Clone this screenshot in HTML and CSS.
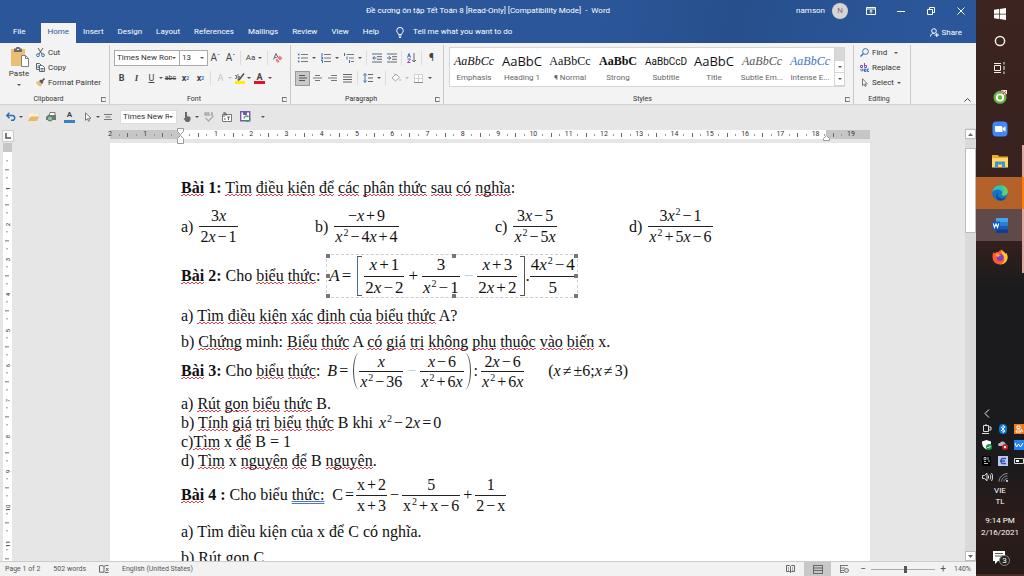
FILE: index.html
```html
<!DOCTYPE html>
<html lang="vi">
<head>
  <meta charset="UTF-8">
  <meta name="viewport" content="width=device-width, initial-scale=1.0">
  <title>Đề cương ôn tập Tết Toán 8 - Word</title>
  <link rel="stylesheet" href="styles.css">
</head>
<body>
  <div class="word">
    <header class="titlebar">
      <div class="title-row">
        <h1 class="title">Đề cương ôn tập Tết Toán 8 [Read-Only] [Compatibility Mode]&nbsp; -&nbsp; Word</h1>
        <div class="window-tools">
          <span>namson</span>
          <span class="avatar">N</span>
          <button class="win-btn" aria-label="Ribbon display options"><svg width="10" height="8" viewBox="0 0 10 8"><path d="M.5.5h9v7h-9zM.5 2h9M5 6.500V3.500M3.500 4.700 5 3.300l1.500 1.400" fill="none" stroke="#fff"/></svg></button>
          <button class="win-btn" aria-label="Minimize"><svg width="8" height="8" viewBox="0 0 8 8"><path d="M0 4.500h8" stroke="#fff"/></svg></button>
          <button class="win-btn" aria-label="Restore"><svg width="8" height="8" viewBox="0 0 8 8"><path d="M.5 2.500h5v5h-5zM2.500 2V.5h5v5H6" fill="none" stroke="#fff"/></svg></button>
          <button class="win-btn" aria-label="Close"><svg width="8" height="8" viewBox="0 0 8 8"><path d="M.5.5l7 7M7.500.5l-7 7" stroke="#fff"/></svg></button>
        </div>
      </div>
      <nav class="tabs">
        <a class="tab file" href="#">File</a>
        <a class="tab active" href="#">Home</a>
        <a class="tab" href="#">Insert</a>
        <a class="tab" href="#">Design</a>
        <a class="tab" href="#">Layout</a>
        <a class="tab" href="#">References</a>
        <a class="tab" href="#">Mailings</a>
        <a class="tab" href="#">Review</a>
        <a class="tab" href="#">View</a>
        <a class="tab" href="#">Help</a>
        <button class="tell-me">
          <svg width="8" height="11" viewBox="0 0 8 11"><path d="M2.500 7.500C2.500 6.300.7 5.500.7 3.700a3.300 3.300 0 0 1 6.600 0c0 1.800-1.800 2.600-1.800 3.800zM2.500 9h3M3 10.500h2" fill="none" stroke="#fff"/></svg>
          Tell me what you want to do
        </button>
        <button class="share">
          <svg width="9" height="9" viewBox="0 0 9 9"><path d="M.5 8.500c0-2 1.500-3.200 3.500-3.200M4 .7a2.200 2.200 0 1 1 0 4.600 2.200 2.200 0 0 1 0-4.600M4.500 7H9M6.800 4.800v4.400" fill="none" stroke="#fff"/></svg>
          Share
        </button>
      </nav>
    </header>

    <section class="ribbon">
      <div class="group clipboard">
        <div class="group-body">
          <button class="paste">
            <svg width="19" height="21" viewBox="0 0 19 21"><path d="M1 2h14v17H1z" fill="#eabf73"/><path d="M4 1.500h2a2 2 0 0 1 4 0h2V5H4z" fill="#6a6a6a"/><path d="M7 2h2v1H7z" fill="#fff"/><path d="M11.500 8.500h4l3 3v8h-7z" fill="#fff" stroke="#808080"/><path d="M15.500 8.500v3h3" fill="none" stroke="#808080"/></svg>
            Paste
            <span class="caret"></span>
          </button>
          <div class="stack">
            <button class="cmd"><svg width="9" height="9" viewBox="0 0 9 9"><path d="M2 0l4 6M7 0L3 6" stroke="#555" fill="none"/><circle cx="2" cy="7.200" r="1.400" fill="none" stroke="#3a6db5"/><circle cx="7" cy="7.200" r="1.400" fill="none" stroke="#3a6db5"/></svg>Cut</button>
            <button class="cmd"><svg width="9" height="9" viewBox="0 0 9 9"><path d="M3 6.500H.5v-6h3L5 2" fill="none" stroke="#666"/><path d="M3.500 2.500h3l2 2v4h-5z" fill="#fff" stroke="#666"/><path d="M4.500 5.500h3M4.500 7h3M1.500 3h1.500M1.500 4.500h1.500" stroke="#3a6db5"/></svg>Copy</button>
            <button class="cmd"><svg width="9" height="9" viewBox="0 0 9 9"><path d="M0 4l3-1 3 3-1 2.500-2-.5L0 5z" fill="#eabf73"/><path d="M3 3l2-1.500L7.500 4 6 6z" fill="#555"/><path d="M6 3l2.500-2.500" stroke="#555" stroke-width="1.600"/></svg>Format Painter</button>
          </div>
        </div>
        <div class="group-label">Clipboard<i class="launcher"></i></div>
      </div>

      <div class="group font">
        <div class="group-body column">
          <div class="tools">
            <label class="combo family"><select aria-label="Font"><option>Times New Roman</option></select><span class="caret"></span></label><label class="combo size"><select aria-label="Font size"><option>13</option></select><span class="caret"></span></label>
            <button class="ico letter-btn">A<sup>ˆ</sup></button>
            <button class="ico letter-btn">A<sup>ˇ</sup></button>
            <i class="sep"></i>
            <button class="ico case-btn">Aa<span class="caret"></span></button>
            <i class="sep light"></i>
            <button class="ico" aria-label="Clear formatting"><svg width="10" height="10" viewBox="0 0 10 10"><path d="M.5 6.500L3 .5l2 4M1.500 4.500h2" fill="none" stroke="#666"/><path d="M2.500 7l4-4.500L9.500 5l-4 4.500H4z" fill="#e8808c"/><path d="M4 5.300l3 2.500" stroke="#fff"/></svg></button>
          </div>
          <div class="tools second">
            <button class="ico bold">B</button>
            <button class="ico ital">I</button>
            <button class="ico under">U</button>
            <span class="caret"></span>
            <button class="ico strike">abc</button>
            <button class="ico bold">x<sub>2</sub></button>
            <button class="ico bold">x<sup>2</sup></button>
            <i class="sep light"></i>
            <button class="ico effect">A</button>
            <span class="caret pale"></span>
            <button class="ico" aria-label="Highlight"><svg width="10" height="11" viewBox="0 0 10 11"><path d="M0 8h10v3H0z" fill="#ffee00"/><path d="M4 7l5-6.500M3 7.500L4.500 5" stroke="#555" stroke-width="1.600"/><path d="M0 2.500h1.500v3H0M3 1v4.500h1.500v-2H3" fill="none" stroke="#777"/></svg></button>
            <span class="caret"></span>
            <button class="ico color">A</button>
            <span class="caret"></span>
          </div>
        </div>
        <div class="group-label">Font<i class="launcher"></i></div>
      </div>

      <div class="group paragraph">
        <div class="group-body column">
          <div class="tools">
            <button class="ico" aria-label="Bullets"><svg width="10" height="10" viewBox="0 0 10 10"><path d="M3 1.500h7M3 5h7M3 8.500h7" stroke="#777"/><path d="M0 1.500h1.500M0 5h1.500M0 8.500h1.500" stroke="#3a6db5" stroke-width="1.500"/></svg></button>
            <span class="caret"></span>
            <button class="ico" aria-label="Numbering"><svg width="10" height="10" viewBox="0 0 10 10"><path d="M3 1.500h7M3 5h7M3 8.500h7" stroke="#777"/><path d="M1 0v3M0 4h1.500v2H0M0 7.500h1.500V10" stroke="#3a6db5" fill="none"/></svg></button>
            <span class="caret"></span>
            <button class="ico" aria-label="Multilevel list"><svg width="10" height="10" viewBox="0 0 10 10"><path d="M2.500 1.500H10M5 5h5M7 8.500h3" stroke="#777"/><path d="M.5 0v3M3 3.500v3M5.500 7v3" stroke="#3a6db5"/></svg></button>
            <span class="caret"></span>
            <i class="sep light"></i>
            <button class="ico" aria-label="Decrease indent"><svg width="10" height="10" viewBox="0 0 10 10"><path d="M0 1h10M5 3.700h5M5 6.300h5M0 9h10" stroke="#666"/><path d="M4.500 5H.8M2.500 3.200L.8 5l1.700 1.800" fill="none" stroke="#3a6db5"/></svg></button>
            <button class="ico" aria-label="Increase indent"><svg width="10" height="10" viewBox="0 0 10 10"><path d="M0 1h10M5 3.700h5M5 6.300h5M0 9h10" stroke="#666"/><path d="M0 5h3.700M2 3.200L3.700 5 2 6.800" fill="none" stroke="#3a6db5"/></svg></button>
            <i class="sep light"></i>
            <button class="ico" aria-label="Sort"><svg width="10" height="10" viewBox="0 0 10 10"><path d="M.5 4.500L2 .5l1.500 4M1 3h2" fill="none" stroke="#3a6db5"/><path d="M.5 6h3l-3 3.500h3" fill="none" stroke="#8a4fb0"/><path d="M7 0v9M5 7l2 2 2-2" fill="none" stroke="#666"/></svg></button>
            <i class="sep light"></i>
            <button class="ico letter-btn">¶</button>
          </div>
          <div class="tools second">
            <button class="ico pressed" aria-label="Align left"><svg width="10" height="8" viewBox="0 0 10 8"><path d="M1 1.500h6M1 4h8M1 6.500h6" stroke="#555"/></svg></button>
            <button class="ico" aria-label="Center"><svg width="9" height="8" viewBox="0 0 9 8"><path d="M2 1.500h5M0 4h9M2 6.500h5" stroke="#777"/></svg></button>
            <button class="ico" aria-label="Align right"><svg width="9" height="8" viewBox="0 0 9 8"><path d="M3 1.500h6M0 4h9M3 6.500h6" stroke="#777"/></svg></button>
            <button class="ico" aria-label="Justify"><svg width="9" height="9" viewBox="0 0 9 9"><path d="M0 .5h9M0 3h9M0 5.500h9M0 8h9" stroke="#666"/></svg></button>
            <i class="sep light"></i>
            <button class="ico" aria-label="Line spacing"><svg width="10" height="10" viewBox="0 0 10 10"><path d="M5 1.500h5M5 5h5M5 8.500h5" stroke="#666"/><path d="M2 .5v9M.3 2.500L2 .7l1.700 1.800M.3 7.500L2 9.300l1.700-1.800" fill="none" stroke="#3a6db5"/></svg></button>
            <span class="caret"></span>
            <i class="sep light"></i>
            <button class="ico" aria-label="Shading"><svg width="10" height="10" viewBox="0 0 10 10"><path d="M1 5l4-4 3.500 3.500-4 3.500z M3 .5l2 2M9 6v2" fill="#fff" stroke="#aaa"/></svg></button>
            <span class="caret pale"></span>
            <button class="ico" aria-label="Borders"><svg width="9" height="9" viewBox="0 0 9 9"><path d="M.5.5h8v8h-8zM4.500.5v8M.5 4.500h8" fill="#fff" stroke="#d0d0d0"/><path d="M0 8.500h9" stroke="#888"/></svg></button>
            <span class="caret"></span>
          </div>
        </div>
        <div class="group-label">Paragraph<i class="launcher"></i></div>
      </div>

      <div class="group styles">
        <div class="group-body">
          <div class="gallery">
            <button class="style"><b class="s-serif s-it">AaBbCc</b>Emphasis</button>
            <button class="style"><b class="s-sans">AaBbC</b>Heading 1</button>
            <button class="style"><b class="s-serif">AaBbCc</b>¶ Normal</button>
            <button class="style"><b class="s-serif s-bold">AaBbC</b>Strong</button>
            <button class="style"><b class="s-small">AaBbCcD</b>Subtitle</button>
            <button class="style"><b class="s-sans">AaBbC</b>Title</button>
            <button class="style"><b class="s-serif s-it s-grey">AaBbCc</b>Subtle Em...</button>
            <button class="style"><b class="s-serif s-it s-blue">AaBbCc</b>Intense E...</button>
            <div class="gallery-scroll"><i class="dim"></i><i><span class="caret"></span></i><i class="more"><span class="caret"></span></i></div>
          </div>
        </div>
        <div class="group-label">Styles<i class="launcher"></i></div>
      </div>

      <div class="group editing">
        <div class="group-body">
          <div class="stack">
            <button class="cmd"><svg width="9" height="9" viewBox="0 0 9 9"><circle cx="5.500" cy="3.500" r="2.900" fill="none" stroke="#3a6db5"/><path d="M3.300 5.700L.5 8.500" stroke="#3a6db5" stroke-width="1.400"/></svg>Find<span class="caret wide"></span></button>
            <button class="cmd"><svg width="9" height="9" viewBox="0 0 9 9"><path d="M.5 2.500h2v2h-2zM4.500 0v4.500h2v-2h-2" fill="none" stroke="#8a4fb0"/><path d="M0 7h3M2 5.500L3.500 7 2 8.500M4.500 6h1.500v2.500h-1.500zM9 6H7.500v2.500H9" fill="none" stroke="#3a6db5"/></svg>Replace</button>
            <button class="cmd"><svg width="9" height="9" viewBox="0 0 9 9"><path d="M2.500.7v7l1.700-1.500 1 2.300 1-.5-1-2.200h2z" fill="#fff" stroke="#777"/></svg>Select<span class="caret"></span></button>
          </div>
        </div>
        <div class="group-label">Editing</div>
      </div>
      <button class="collapse" aria-label="Collapse the ribbon"><svg width="7" height="4" viewBox="0 0 7 4"><path d="M.5 3.500l3-3 3 3" fill="none" stroke="#444"/></svg></button>
    </section>

    <div class="quick">
      <button class="ico" aria-label="Undo"><svg width="10" height="9" viewBox="0 0 10 9"><path d="M.8 3.500h5.500a2.400 2.400 0 0 1 0 4.800H5M3.500.7L.8 3.500l2.700 2.800" fill="none" stroke="#2f6db5" stroke-width="1.400"/></svg></button>
      <span class="caret"></span>
      <button class="ico gap" aria-label="Open"><svg width="11" height="8" viewBox="0 0 11 8"><path d="M1 .5h4l1 1h4V4H1z" fill="#fff0cf"/><path d="M2.500 3.500H11L9 8H0z" fill="#e8b863"/></svg></button>
      <button class="ico gap" aria-label="Print preview"><svg width="11" height="10" viewBox="0 0 11 10"><path d="M2 3h8v5H0V5z" fill="#777"/><path d="M4 .5h5v3H3z" fill="#fff" stroke="#777"/><circle cx="4" cy="6.500" r="2.500" fill="#8fc6a0" stroke="#4e7f6a"/></svg></button>
      <button class="ico gap qcolor">A</button>
      <button class="ico gap" aria-label="Select objects"><svg width="8" height="10" viewBox="0 0 8 10"><path d="M1.500.8v7.500l2-1.700 1 2.600 1.200-.5-1-2.500h2.300z" fill="#fff" stroke="#777"/></svg></button>
      <span class="caret"></span>
      <button class="ico" aria-label="Center"><svg width="8" height="8" viewBox="0 0 8 8"><path d="M0 1.500h8M1.500 4h5M0 6.500h8" stroke="#777"/></svg></button>
      <label class="combo quick-font"><select aria-label="Font name"><option>Times New Roman</option></select><span class="caret"></span></label>
      <button class="ico" aria-label="Touch mode"><svg width="8" height="10" viewBox="0 0 8 10"><path d="M2 0h2v4l3.500 1v3L6 10H3L.5 6.500 2 6z" fill="#6a6a6a"/></svg></button>
      <span class="caret"></span>
      <button class="ico gap" aria-label="Spelling"><svg width="10" height="10" viewBox="0 0 10 10"><path d="M1 1h2v2H1zM4.500 0v3h1.500M9 1H7.500v2H9M1.500 6l3 3L9.500 4" fill="none" stroke="#aaa" stroke-width="1.300"/></svg></button>
      <button class="ico gap" aria-label="Text box"><svg width="10" height="10" viewBox="0 0 10 10"><path d="M.5 2.500h9v7h-9z" fill="#fff" stroke="#777"/><path d="M2 0v5M2 1h2v3M5 5h3M6.500 5v3M2 7h2" fill="none" stroke="#666"/></svg></button>
      <button class="ico gap" aria-label="Save"><svg width="11" height="11" viewBox="0 0 11 11"><path d="M.7.7h9v9h-9z" fill="#fff" stroke="#7a58a8" stroke-width="1.400"/><path d="M3 1h4v3H3z" fill="#7a58a8"/><path d="M4 7.500a2.500 2.500 0 0 1 4.500-1.500M10 7.500a2.500 2.500 0 0 1-4.500 1.700" fill="none" stroke="#3f9b6a" stroke-width="1.400"/></svg></button>
      <span class="caret more-tools"></span>
    </div>

    <main class="workspace">
      <aside class="ruler-side">
        <div class="corner"><svg width="6" height="6" viewBox="0 0 6 6"><path d="M1 0v5h5" fill="none" stroke="#555" stroke-width="1.500"/></svg></div>
        <div class="vruler">
          <div class="margin"></div>
          <ol class="vmarks"><li></li><li>1</li><li>2</li><li>3</li><li>4</li><li>5</li><li>6</li><li>7</li><li>8</li><li>9</li><li>10</li><li>11</li></ol>
        </div>
      </aside>

      <div class="sheet">
        <div class="hruler">
          <ol class="hmarks">
            <li><span>2</span></li><li><span>1</span></li><li><span></span></li><li><span>1</span></li><li><span>2</span></li><li><span>3</span></li><li><span>4</span></li><li><span>5</span></li><li><span>6</span></li><li><span>7</span></li><li><span>8</span></li><li><span>9</span></li><li><span>10</span></li><li><span>11</span></li><li><span>12</span></li><li><span>13</span></li><li><span>14</span></li><li><span>15</span></li><li><span>16</span></li><li><span>17</span></li><li><span>18</span></li><li class="last"><span>19</span></li>
          </ol>
          <svg class="indent left" width="7" height="16" viewBox="0 0 7 16"><path d="M.5.5h6v3l-3 3-3-3zM3.500 7.500l3 3v5h-6v-5z" fill="#fff" stroke="#999"/></svg>
          <svg class="indent right" width="7" height="6" viewBox="0 0 7 6"><path d="M3.500.5l3 3v2h-6v-2z" fill="#fff" stroke="#999"/></svg>
        </div>

        <article class="page">
          <p class="line"><b><u>Bài</u> 1:</b> <u>Tìm</u> <u>điều</u> <u>kiện</u> <u>để</u> <u>các</u> <u>phân</u> <u>thức</u> <u>sau</u> <u>có</u> <u>nghĩa</u>:</p>

          <div class="exercises">
            <div class="eq">a) <span class="frac"><span>3<i>x</i></span><span>2<i>x</i><em>−</em>1</span></span></div>
            <div class="eq">b) <span class="frac"><span>−<i>x</i><em>+</em>9</span><span><i>x</i><sup>2</sup><em>−</em>4<i>x</i><em>+</em>4</span></span></div>
            <div class="eq">c) <span class="frac"><span>3<i>x</i><em>−</em>5</span><span><i>x</i><sup>2</sup><em>−</em>5<i>x</i></span></span></div>
            <div class="eq">d) <span class="frac"><span>3<i>x</i><sup>2</sup><em>−</em>1</span><span><i>x</i><sup>2</sup><em>+</em>5<i>x</i><em>−</em>6</span></span></div>
          </div>

          <div class="line equation second-eq">
            <p><b><u>Bài</u> 2:</b> Cho <u>biểu</u> <u>thức</u>:</p>
            <div class="selected">
              <span><i>A</i><em>=</em></span>
              <span class="bracket open"></span>
              <span class="frac"><span><i>x</i><em>+</em>1</span><span>2<i>x</i><em>−</em>2</span></span>
              <span class="op">+</span>
              <span class="frac"><span>3</span><span><i>x</i><sup>2</sup><em>−</em>1</span></span>
              <span class="op faint">−</span>
              <span class="frac"><span><i>x</i><em>+</em>3</span><span>2<i>x</i><em>+</em>2</span></span>
              <span class="bracket close"></span>
              <span class="dot">.</span>
              <span class="frac"><span>4<i>x</i><sup>2</sup><em>−</em>4</span><span>5</span></span>
              <i class="handle tl"></i><i class="handle tc"></i><i class="handle tr"></i>
              <i class="handle ml"></i><i class="handle mr"></i>
              <i class="handle bl"></i><i class="handle bc"></i><i class="handle br"></i>
            </div>
          </div>
          <p class="line spaced">a) <u>Tìm</u> <u>điều</u> <u>kiện</u> <u>xác</u> <u>định</u> <u>của</u> <u>biểu</u> <u>thức</u> A?</p>
          <p class="line snug">b) <u>Chứng</u> minh: <u>Biểu</u> <u>thức</u> A <u>có</u> <u>giá</u> <u>trị</u> <u>không</u> <u>phụ</u> <u>thuộc</u> <u>vào</u> <u>biến</u> x.</p>

          <div class="line equation third-eq">
            <p><b><u>Bài</u> 3:</b> Cho <u>biểu</u> <u>thức</u>:</p>
            <div class="math">
              <span><i>B</i><em>=</em></span>
              <span class="paren open"></span>
              <span class="frac"><span><i>x</i></span><span><i>x</i><sup>2</sup><em>−</em>36</span></span>
              <span class="op faint">−</span>
              <span class="frac"><span><i>x</i><em>−</em>6</span><span><i>x</i><sup>2</sup><em>+</em>6<i>x</i></span></span>
              <span class="paren close"></span>
              <span class="colon">:</span>
              <span class="frac"><span>2<i>x</i><em>−</em>6</span><span><i>x</i><sup>2</sup><em>+</em>6<i>x</i></span></span>
              <span class="condition">(<i>x</i><em>≠</em>±6;<i>x</i><em>≠</em>3)</span>
            </div>
          </div>
          <div class="tight">
            <p>a) <u>Rút</u> <u>gọn</u> <u>biểu</u> <u>thức</u> B.</p>
            <p>b) <u>Tính</u> <u>giá</u> <u>trị</u> <u>biểu</u> <u>thức</u> B khi <span class="inline-eq"><i>x</i><sup>2</sup><em>−</em>2<i>x</i><em>=</em>0</span></p>
            <p>c)<u>Tìm</u> x <u>để</u> B = 1</p>
            <p>d) <u>Tìm</u> x <u>nguyên</u> <u>để</u> B <u>nguyên</u>.</p>
          </div>

          <div class="line equation fourth-eq">
            <p><b><u>Bài</u> 4 :</b> Cho biểu <u class="grammar">thức:</u></p>
            <div class="math">
              <span>C<em>=</em></span>
              <span class="frac"><span>x<em>+</em>2</span><span>x<em>+</em>3</span></span>
              <span class="op">−</span>
              <span class="frac"><span>5</span><span>x<sup>2</sup><em>+</em>x<em>−</em>6</span></span>
              <span class="op">+</span>
              <span class="frac"><span>1</span><span>2<em>−</em>x</span></span>
            </div>
          </div>
          <p class="line">a) Tìm điều kiện của x để C có nghĩa.</p>
          <p class="line">b) Rút gọn C</p>
        </article>
      </div>

      <div class="scrollbar">
        <button aria-label="Scroll up"><svg width="5" height="3" viewBox="0 0 5 3"><path d="M0 3l2.500-3L5 3z" fill="#666"/></svg></button>
        <div class="thumb"></div>
        <button aria-label="Scroll down"><svg width="5" height="3" viewBox="0 0 5 3"><path d="M0 0h5L2.500 3z" fill="#666"/></svg></button>
      </div>
    </main>

    <footer class="status">
      <span>Page 1 of 2</span>
      <span>502 words</span>
      <svg width="10" height="8" viewBox="0 0 10 8"><path d="M5 1.500v6M5 1.500C4 .5 2 .5.5.7v6.500h4.500M5 1.500C6 .5 7 .5 9.500.5M7 3l2.500 3M9.500 3L7 6M6 7.500h3.500" fill="none" stroke="#666"/></svg>
      <span>English (United States)</span>
      <div class="views">
        <button class="view" aria-label="Read mode"><svg width="9" height="8" viewBox="0 0 9 8"><path d="M.5.5h3l1 1 1-1h3v6h-3l-1 1-1-1h-3zM4.500 1.500v6M2 3h1M2 5h1M6 3h1M6 5h1" fill="none" stroke="#666"/></svg></button>
        <button class="view on" aria-label="Print layout"><svg width="10" height="9" viewBox="0 0 10 9"><path d="M.5 0v9M9.500 0v9M0 .5h10M0 3h10M0 5.500h10M0 8.500h10" stroke="#666"/></svg></button>
        <button class="view" aria-label="Web layout"><svg width="9" height="8" viewBox="0 0 9 8"><path d="M0 .5h8M0 3h5M0 5.500h4M0 7.500h4M.5 0v8" stroke="#777"/><circle cx="6.500" cy="5.500" r="2" fill="#ddd" stroke="#777"/></svg></button>
        <button class="zoom-btn">−</button>
        <input class="zoom" type="range" min="0" max="100" value="54" aria-label="Zoom">
        <button class="zoom-btn">+</button>
        <span class="percent">140%</span>
      </div>
    </footer>
  </div>

  <aside class="taskbar">
    <button class="start" aria-label="Start"><svg width="12" height="12" viewBox="0 0 12 12"><path d="M0 1.800l5-.7v4.600H0zM5.700 1L12 0v5.700H5.700zM0 6.400h5V11l-5-.8zM5.700 6.400H12V12l-6.300-.9z" fill="#fff"/></svg></button>
    <button class="start" aria-label="Cortana"><svg width="12" height="12" viewBox="0 0 12 12"><circle cx="6" cy="6" r="4.600" fill="none" stroke="#eee" stroke-width="1.500"/></svg></button>
    <button class="start" aria-label="Task view"><svg width="12" height="12" viewBox="0 0 12 12"><path d="M.5 3.500h6v5h-6zM0 1.500h7M0 10.500h7M10 0v2.500M10 4v4M10 9.500V12" fill="none" stroke="#eee"/></svg></button>
    <button class="app" aria-label="Coc Coc"><svg width="14" height="14" viewBox="0 0 14 14"><circle cx="7" cy="7.300" r="6.500" fill="#67b344"/><circle cx="7" cy="7.500" r="3.200" fill="none" stroke="#fff" stroke-width="1.800"/><path d="M8 0h6v4l-3 1z" fill="#f4e8e0"/><path d="M9 1l4 3M13 1l-3 3" stroke="#b44"/></svg></button>
    <button class="app" aria-label="Zoom"><svg width="16" height="16" viewBox="0 0 16 16"><rect x=".5" y=".5" width="15" height="15" rx="4" fill="#4087fc"/><path d="M3 5h6a1.500 1.500 0 0 1 1.500 1.500V11h-6A1.500 1.500 0 0 1 3 9.500zM11 7l2.500-1.700v5.400L11 9z" fill="#fff"/></svg></button>
    <button class="app open" aria-label="File Explorer"><svg width="16" height="13" viewBox="0 0 16 13"><path d="M0 0h6l1 1.500h9V12H0z" fill="#e9a928"/><path d="M0 3h16v9.500H0z" fill="#ffd868"/><path d="M3 6.500h10v6h-3v-3H6v3H3z" fill="#3f95cf"/></svg></button>
    <button class="app edge open" aria-label="Edge"><svg width="16" height="16" viewBox="0 0 16 16"><circle cx="8" cy="8" r="7.800" fill="#1674c4"/><path d="M.4 7C1 3 4 .2 8 .2c4.600 0 7.800 3.300 7.800 6.600 0 2.400-1.700 3.800-4 3.800-1.800 0-2.600-.8-2-1.800C11 6 8 4.300 5.500 4.500 3 4.700 1 6 .4 7z" fill="#35c1b4"/><path d="M9 .3c4 .3 6.800 3.300 6.800 6.500 0 2.400-1.700 3.800-4 3.800-1.200 0-2-.5-2-1.200C13 8 13 3 9 .3z" fill="#6bd15c"/><path d="M6 7.500c-1.500 2.500.5 6 4 6 1.800 0 3.500-.7 4.500-1.800C13 14.500 10.500 16 8 15.800 3.500 15 3.500 9 6 7.500z" fill="#114a8b"/></svg></button>
    <button class="app current open" aria-label="Word"><svg width="16" height="15" viewBox="0 0 16 15"><path d="M4 0h12v4H4z" fill="#41a5ee"/><path d="M4 4h12v4H4z" fill="#2b7cd3"/><path d="M4 8h12v3.500H4z" fill="#185abd"/><path d="M4 11.500h12V15H4z" fill="#103f91"/><path d="M0 3.500h8v8H0z" fill="#1a56b8"/><path d="M1.300 5.500l1.200 4L4 6l1.500 3.500 1.200-4" fill="none" stroke="#fff" stroke-width="1.100"/></svg></button>
    <button class="app open" aria-label="Firefox"><svg width="16" height="16" viewBox="0 0 16 16"><path d="M1.500 3L3 4.500C4 3 5 3 6 3.200 7 2 8 1.500 10 .5c0 2 2.500 2 3.500 4.500l.8-1C16 7 16 10 14 12.800 11 16.500 5 16.500 2 12.800.2 10.500 0 6 1.500 3z" fill="#ff5a36"/><path d="M10 .5c0 2 2.500 2 3.500 4.500l.8-1C16 7 16 10 14 12.800c-1.500 1.900-4 2.700-6 2.700 4-1.500 6-5 3-9.500C9.500 4.500 9 2.500 10 .5z" fill="#ffc933"/><circle cx="8" cy="8.500" r="3.400" fill="#7a41c8"/><path d="M3 5c1.500-1 3-.7 4 .3l2 .9c-2 .5-2 1.300-3.500 2C4.500 7.500 3.500 6.500 3 5z" fill="#ff9a2b"/></svg></button>

    <div class="tray">
      <button class="chevron" aria-label="Show hidden icons"><svg width="6" height="9" viewBox="0 0 6 9"><path d="M5 .5l-4 4 4 4" fill="none" stroke="#eee"/></svg></button>
      <div class="tray-icons">
        <svg width="10" height="10" viewBox="0 0 10 10"><path d="M1.500 1.500h5v6h-5zM6.500 3h2.500v3H6.500M0 9.500h7M3 0h2" fill="none" stroke="#ddd"/></svg>
        <svg width="10" height="10" viewBox="0 0 10 10"><rect x="1" width="8" height="10" rx="4" fill="#0a78e0"/><path d="M3 3l4 4-2 1.500v-7L7 3 3 7" fill="none" stroke="#fff" stroke-width=".9"/></svg>
        <svg width="10" height="10" viewBox="0 0 10 10"><path d="M0 0h10v10H0z" fill="#ee7a22"/><path d="M3 2h3v2.500H3zM2 8c0-3 5-3 5 0zM7 5l2 3" fill="none" stroke="#fff"/></svg>
        <svg width="10" height="10" viewBox="0 0 10 10"><path d="M0 1.500L4.500 0 9 1.500C9 5 8 8 4.500 9.500 1 8 0 5 0 1.500z" fill="#fff"/><circle cx="7" cy="7" r="3" fill="#1c9a50"/><path d="M5.500 7l1 1 2-2" fill="none" stroke="#fff"/></svg>
        <svg width="10" height="10" viewBox="0 0 10 10"><path d="M0 5c0-2 2-2 2-2 1-2 4-2 5 0l2 3H1z" fill="#bbb"/><circle cx="7" cy="7" r="3" fill="#d2222e"/><path d="M6 6l2 2M8 6L6 8" stroke="#fff"/></svg>
        <svg width="10" height="10" viewBox="0 0 10 10"><path d="M0 0h10v10H0z" fill="#2382ee"/><path d="M1 3l1.500 4L4.500 4l2 3L9 3" fill="none" stroke="#fff"/></svg>
        <svg width="10" height="10" viewBox="0 0 10 10"><path d="M0 0h9v10H0z" fill="#000"/><path d="M2 1.500h2v2H2zM6 1v3M2 5.500h2M6 5h2M2 7.500h4" fill="none" stroke="#bbb"/></svg>
        <svg width="10" height="10" viewBox="0 0 10 10"><path d="M0 0h10v10H0z" fill="#b9c8f0"/><path d="M8 2.500H4L2.500 5 4 7.500h4M2.500 5H7" fill="none" stroke="#3650a8" stroke-width="1.300"/></svg>
        <svg width="10" height="10" viewBox="0 0 10 10"><path d="M.5 2.500h9v5h-9z" fill="none" stroke="#ddd"/><path d="M2 4h3v2H2z" fill="#fff"/></svg>
        <svg width="11" height="10" viewBox="0 0 11 10"><path d="M.5 3.500h2L5 1.200v7.600L2.500 6.500h-2zM6.500 3.500v3M8 2.500c1 1.500 1 3.500 0 5M9.500 1c1.500 2.500 1.500 5.500 0 8" fill="none" stroke="#ddd"/></svg>
        <svg width="10" height="10" viewBox="0 0 10 10"><path d="M1 9.500c0-4 4-8 8.500-8M3.500 9.500c0-3 3-5.500 6-5.500M6 9.500c0-2 2-3 3.500-3" fill="none" stroke="#999"/><circle cx="9" cy="9" r="1" fill="#eee"/></svg>
      </div>
      <div class="lang"><span>VIE</span><span>TL</span></div>
      <div class="clock"><time>9:14 PM</time><time>2/16/2021</time></div>
      <button class="notice" aria-label="Notifications"><svg width="14" height="13" viewBox="0 0 14 13"><path d="M0 0h12v10H5l-3 3v-3H0z" fill="#fff"/><path d="M2 2.500h8M2 5h8" stroke="#555"/></svg><span class="count">3</span></button>
    </div>
  </aside>
</body>
</html>
```

FILE: styles.css
```css
* {
  box-sizing: border-box;
}
body {
  display: flex;
  height: 100vh;
  margin: 0;
  overflow: hidden;
  font-family: Roboto, "Noto Sans", sans-serif;
  font-size: 8px;
  line-height: 12px;
  color: #333;
  background: #e6e6e6;
}
button {
  display: flex;
  align-items: center;
  justify-content: center;
  padding: 0;
  border: none;
  background: none;
  font: inherit;
  color: inherit;
}
svg {
  display: block;
  flex: none;
}
p, h1, ol {
  margin: 0;
  padding: 0;
  list-style: none;
}
.word {
  flex: 1;
  min-width: 0;
  display: flex;
  flex-direction: column;
}
.caret {
  flex: none;
  width: 0;
  border: 2px solid transparent;
  border-top-color: #555;
  border-bottom: 0;
}
.caret.pale {
  border-top-color: #bbb;
}

/* title bar and tabs */
.titlebar {
  background: linear-gradient(100deg, #2b579a 60%, #274f8c 75%, #2b579a 95%);
  color: #fff;
}
.title-row {
  display: grid;
  grid-template-columns: 1fr auto 1fr;
  align-items: center;
  height: 22px;
}
.title {
  grid-column: 2;
  font-size: 8px;
  font-weight: normal;
}
.window-tools {
  display: flex;
  align-items: center;
  justify-content: flex-end;
}
.avatar {
  width: 16px;
  height: 16px;
  margin: 0 8px 0 7px;
  border-radius: 50%;
  background: #d8d4d4;
  color: #777;
  line-height: 16px;
  text-align: center;
}
.win-btn {
  width: 30px;
  height: 20px;
}
.tabs {
  display: flex;
  height: 21px;
}
.tab {
  padding: 4px 7px 0;
  color: #fff;
  text-decoration: none;
}
.tab.file {
  padding: 4px 15px 0 13px;
}
.tab.active {
  margin-top: 1px;
  padding-top: 3px;
  background: #f3f3f3;
  color: #2b579a;
}
.tell-me {
  gap: 9px;
  height: 20px;
  margin-left: 10px;
}
.share {
  gap: 3px;
  margin-left: auto;
  margin-right: 14px;
}

/* ribbon */
.ribbon {
  display: flex;
  height: 62px;
  padding-top: 2px;
  background: #f3f3f3;
  border-bottom: 1px solid #d2d2d2;
}
.group {
  display: flex;
  flex-direction: column;
  flex: none;
  border-right: 1px solid #c8c8c8;
}
.clipboard { width: 110px; }
.font { width: 181px; }
.paragraph { width: 153px; }
.styles { width: 410px; }
.editing { width: 57px; }
.group-body {
  display: flex;
  height: 49px;
}
.group-body.column {
  flex-direction: column;
}
.group-label {
  position: relative;
  height: 10px;
  line-height: 10px;
  font-size: 7px;
  text-align: center;
  padding-right: 12px;
}
.launcher {
  position: absolute;
  right: 3px;
  top: 3px;
  width: 5px;
  height: 5px;
  border: 1px solid #777;
  border-right-color: #ccc;
}
.paste {
  flex-direction: column;
  justify-content: flex-start;
  width: 38px;
  padding-top: 2px;
}
.paste .caret {
  margin-top: 4px;
}
.stack {
  display: flex;
  flex-direction: column;
}
.cmd {
  justify-content: flex-start;
  gap: 3px;
  height: 15px;
}
.cmd .wide {
  margin-left: 4px;
}
.clipboard .stack {
  margin-left: -2px;
}
.tools {
  display: flex;
  align-items: center;
  height: 17px;
  margin-top: 4px;
  padding-left: 4px;
}
.tools.second {
  height: 16px;
}
.ico {
  flex: none;
  width: 15px;
  height: 15px;
  color: #444;
}
.combo {
  display: flex;
  align-items: center;
  height: 16px;
  padding-right: 3px;
  border: 1px solid #aaa;
  background: #fff;
}
.combo select {
  flex: 1;
  min-width: 0;
  padding: 0 0 0 2px;
  border: none;
  background: none;
  appearance: none;
  font: inherit;
  color: #333;
  text-overflow: clip;
}
.family { width: 66px; }
.size {
  width: 29px;
  margin-left: -1px;
}
.letter-btn {
  font-size: 10px;
}
.letter-btn sup {
  font-size: 7px;
}
.font .case-btn {
  width: 22px;
  gap: 3px;
}
.sep {
  width: 1px;
  height: 14px;
  margin: 0 2px;
  background: #ddd;
}
.bold {
  font-weight: bold;
}
.bold sub,
.bold sup {
  font-size: 5px;
  line-height: 5px;
  color: #3a6db5;
}
.ital {
  font: italic bold 10px "Liberation Serif", serif;
}
.under {
  text-decoration: underline;
}
.font .second .ico {
  font-size: 9px;
}
.font .second .strike {
  text-decoration: line-through;
  font-size: 7px;
}
.font .second .effect {
  color: #c4c4c4;
}
.color,
.qcolor {
  width: 11px;
  height: 12px;
  border-bottom: 3px solid #e8112d;
  font-weight: bold;
  line-height: 8px;
}
.font .second .color {
  width: 11px;
  margin: 0 3px;
}
.qcolor {
  border-bottom-color: #3a7fc4;
}
.paragraph .tools > .caret {
  margin: 0 2px;
}
.pressed {
  background: #c8c8c8;
  border: 1px solid #999;
}

/* style gallery */
.styles .group-body {
  padding: 2px 0 0 5px;
}
.gallery {
  display: flex;
  height: 40px;
  border: 1px solid #d5d5d5;
  background: #fff;
}
.style {
  flex-direction: column;
  justify-content: flex-start;
  width: 48px;
  padding: 3px 4px 0;
  overflow: hidden;
  white-space: nowrap;
  color: #666;
}
.style b {
  height: 21px;
  line-height: 21px;
  font-weight: normal;
  color: #111;
}
.style .s-serif {
  font-family: "Liberation Serif", serif;
  font-size: 12px;
}
.style .s-it { font-style: italic; }
.style .s-bold { font-weight: bold; }
.style .s-sans {
  font-family: "Open Sans", sans-serif;
  font-size: 13px;
}
.style .s-small { font-size: 10px; }
.style .s-grey { color: #555; }
.style .s-blue { color: #4472c4; }
.gallery-scroll {
  display: flex;
  flex-direction: column;
  width: 10px;
  border-left: 1px solid #d5d5d5;
}
.gallery-scroll i {
  flex: 1;
  display: flex;
  align-items: center;
  justify-content: center;
  border-bottom: 1px solid #d5d5d5;
}
.gallery-scroll .dim {
  background: #d8d8d8;
}
.editing {
  padding-left: 6px;
}
.collapse {
  margin: auto 5px 0 auto;
  height: 8px;
}

/* quick access toolbar */
.quick {
  display: flex;
  align-items: center;
  height: 23px;
  padding-left: 3px;
}
.quick .gap {
  margin-left: 2px;
}
.quick .ico {
  width: 16px;
}
.quick .qcolor {
  width: 11px;
  margin: 0 3px 0 5px;
}
.quick-font {
  width: 57px;
  height: 14px;
  margin: 0 2px 0 4px;
  border-color: #ddd;
}
.more-tools {
  margin-left: 8px;
}

/* document area */
.workspace {
  flex: 1;
  display: flex;
  min-height: 0;
}
.ruler-side {
  width: 110px;
  padding: 2px 0 0 2px;
}
.corner {
  display: flex;
  align-items: center;
  justify-content: center;
  width: 12px;
  height: 12px;
  border: 1px solid #ccc;
  background: #f8f8f8;
}
.vruler {
  width: 9px;
  margin: 1px 0 0 1px;
  background: #fff;
  font-size: 6px;
}
.vruler .margin {
  height: 9px;
  background: #c6c6c6;
}
.vmarks {
  height: 424px;
  display: flex;
  flex-direction: column;
}
.vmarks li {
  flex: 1;
  writing-mode: vertical-rl;
  transform: rotate(180deg);
  text-align: right;
  line-height: 9px;
  background:
    linear-gradient(#777, #777) center / 4px 1px no-repeat,
    linear-gradient(#999, #999) center 25% / 2px 1px no-repeat,
    linear-gradient(#999, #999) center 75% / 2px 1px no-repeat;
}
.sheet {
  flex: 0 1 760px;
  min-width: 0;
  display: flex;
  flex-direction: column;
}
.hruler {
  position: relative;
  height: 9px;
  margin: 2px 0 4px;
  background: linear-gradient(to right, #c6c6c6 70px, #fff 70px, #fff 716px, #c6c6c6 716px);
}
.hmarks {
  display: flex;
  width: 741px;
  font-size: 7px;
  line-height: 9px;
}
.hmarks li {
  flex: 1;
  height: 9px;
  background:
    linear-gradient(#666, #666) center / 1px 4px no-repeat,
    linear-gradient(#999, #999) 25% center / 1px 2px no-repeat,
    linear-gradient(#999, #999) 75% center / 1px 2px no-repeat;
}
.hmarks .last {
  flex: 0 0 0;
}
.hmarks span {
  display: flex;
  justify-content: center;
  width: 0;
}
.indent {
  position: absolute;
}
.indent.left {
  left: 67px;
  top: -2px;
}
.indent.right {
  left: 713px;
  top: 5px;
}
.page {
  flex: 1;
  min-height: 0;
  overflow: hidden;
  padding: 35px 0 0 71px;
  background: #fff;
  color: #111;
  font-family: "Liberation Serif", serif;
  font-size: 16px;
  line-height: 20px;
  white-space: nowrap;
}
/* spelling marks: two rows of dashes, offset to make a zigzag */
.page u {
  text-decoration: none;
  background:
    repeating-linear-gradient(to right, #e0444e 0 2px, transparent 2px 4px) 0 100% / 100% 1px no-repeat,
    repeating-linear-gradient(to right, transparent 0 2px, #e0444e 2px 4px) 0 calc(100% - 1px) / 100% 1px no-repeat;
}
.page .grammar {
  background: none;
  text-decoration: underline double #4a78d0 1px;
}
.line {
  margin-bottom: 6px;
}
.line.spaced {
  margin-top: 8px;
}
.line.snug {
  margin-bottom: 0;
}
.exercises {
  display: grid;
  grid-template-columns: 134px 180px 134px auto;
  height: 40px;
  margin: 8px 0;
}
.eq,
.equation,
.math,
.selected {
  display: flex;
  align-items: center;
}
.eq {
  gap: 6px;
}
.page em {
  margin: 0 2px;
  font-style: normal;
}
.page sup {
  margin-left: 1px;
  font-size: 10px;
  line-height: 0;
  vertical-align: 6px;
}
.frac {
  display: flex;
  flex-direction: column;
  text-align: center;
}
.frac > span {
  padding: 0 1px;
}
.frac > span:first-child {
  border-bottom: 1px solid #222;
}
.op {
  margin: 0 4px;
}
.faint {
  color: #b8c8d8;
}
.second-eq {
  height: 44px;
  gap: 6px;
}
.selected {
  position: relative;
  height: 44px;
  padding: 0 1px 0 2px;
  border: 1px dashed #ccc;
  font-size: 17px;
  line-height: 22px;
}
.bracket {
  width: 5px;
  height: 40px;
  border: 1px solid #555;
}
.bracket.open {
  margin: 0 2px 0 4px;
  border-right: none;
  border-left-color: #4a7090;
}
.bracket.close {
  margin-left: 3px;
  border-left: none;
}
.handle {
  position: absolute;
  width: 4px;
  height: 4px;
  background: #777;
}
.tl, .ml, .bl { left: -1px; }
.tc, .bc { left: 50%; }
.tr, .mr, .br { right: -1px; }
.tl, .tc, .tr { top: -1px; }
.ml, .mr { top: 19px; }
.bl, .bc, .br { bottom: -1px; }
.third-eq {
  height: 38px;
  margin: 0 0 4px;
  gap: 7px;
}
.third-eq .frac,
.tight {
  line-height: 19px;
}
.paren {
  width: 6px;
  height: 36px;
  border: 0 solid #444;
}
.paren.open {
  margin-left: 3px;
  border-left-width: 1px;
  border-radius: 6px 0 0 6px / 18px 0 0 18px;
}
.paren.close {
  margin-left: 1px;
  border-right-width: 1px;
  border-radius: 0 6px 6px 0 / 0 18px 18px 0;
}
.colon {
  margin: 0 3px;
}
.condition {
  margin-left: 24px;
}
.inline-eq {
  margin-left: 2px;
}
.fourth-eq {
  height: 42px;
  margin: 4px 0 6px;
  gap: 8px;
}
.fourth-eq .op {
  margin: 0 3px;
}

.scrollbar {
  display: flex;
  flex-direction: column;
  width: 11px;
  margin-left: auto;
  padding-top: 1px;
  background: #dadada;
}
.scrollbar button {
  height: 10px;
  border: 1px solid #bbb;
  background: #fff;
}
.thumb {
  height: 85px;
  margin: 9px 0 auto;
  border: 1px solid #bbb;
  background: #fff;
}

/* status bar */
.status {
  display: flex;
  align-items: center;
  gap: 13px;
  height: 15px;
  padding-left: 5px;
  border-top: 1px solid #ccc;
  background: #f2f2f2;
  font-size: 7px;
  color: #555;
}
.views {
  display: flex;
  align-items: center;
  height: 14px;
  margin-left: auto;
  padding-right: 5px;
}
.view {
  width: 27px;
  height: 14px;
}
.view.on {
  background: #c8c8c8;
}
.zoom-btn {
  width: 10px;
  font-size: 10px;
}
.zoom {
  width: 64px;
  height: 9px;
  margin: 0 3px;
  appearance: none;
  background: linear-gradient(#aaa, #aaa) center / 100% 1px no-repeat;
}
.zoom::-webkit-slider-thumb {
  appearance: none;
  width: 3px;
  height: 7px;
  background: #555;
}
.percent {
  margin-left: 6px;
}

/* windows taskbar */
.taskbar {
  display: flex;
  flex-direction: column;
  width: 48px;
  border-bottom: 2px solid #4a2c26;
  background: linear-gradient(#3c2420, #37211e 235px, #1b1b1d 285px, #1b1a1c 460px, #2b1d1a 520px, #261b19);
  color: #fff;
}
.start {
  height: 27px;
}
.app {
  height: 32px;
}
.app.open {
  border-right: 2px solid #e0a8a0;
  padding-left: 2px;
}
.app.edge {
  border-right-color: #ff7a10;
  background: #b5622a;
}
.app.current {
  background: #5f4949;
}
.tray {
  display: flex;
  flex-direction: column;
  align-items: center;
  margin-top: auto;
}
.chevron {
  align-self: flex-start;
  margin: 0 0 3px 8px;
}
.tray-icons {
  display: grid;
  grid-template-columns: repeat(3, 16px);
  grid-auto-rows: 16px;
  place-items: center;
  margin-left: 6px;
}
.lang,
.clock {
  display: flex;
  flex-direction: column;
  align-items: center;
}
.lang {
  line-height: 11px;
}
.clock {
  margin-top: 8px;
}
.notice {
  position: relative;
  margin: 12px 0 10px;
}
.count {
  position: absolute;
  left: 6px;
  top: 4px;
  width: 11px;
  height: 11px;
  border: 1px solid #888;
  border-radius: 50%;
  background: #222;
  line-height: 9px;
}
```
